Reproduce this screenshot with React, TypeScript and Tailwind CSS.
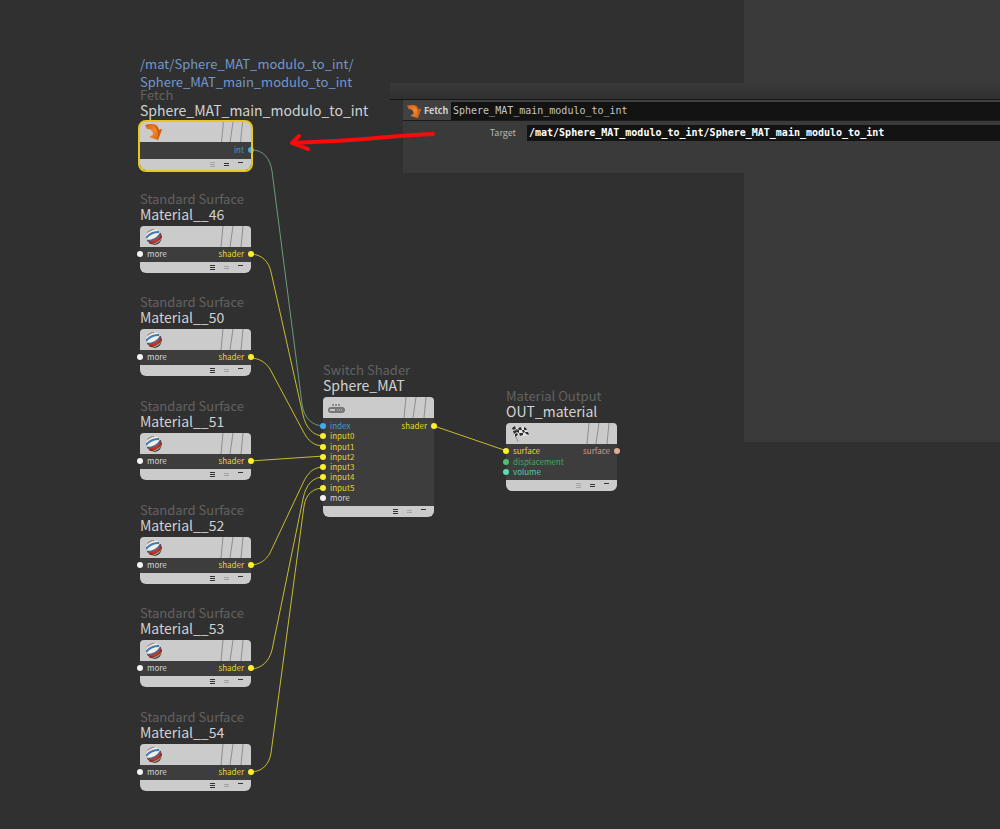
import { useState } from "react"

type Port = { label: string; dot: string; text: string }

type NodeData = {
  id: string
  x: number
  y: number
  type: string
  name: string
  icon: "fetch" | "ball" | "switch" | "flag"
  path?: string[]
  inputs: Port[]
  outputs: Port[]
  body: string
  flags: [boolean, boolean, boolean]
  selected?: boolean
}

const yellow = { dot: "bg-[#fbf02a]", text: "text-[#e3d72c]" }
const white = { dot: "bg-[#f2f2f2]", text: "text-[#d6d6d6]" }
const blue = { dot: "bg-[#42aaf0]", text: "text-[#3f97d0]" }

const material = (num: number, y: number): NodeData => ({
  id: `m${num}`,
  x: 140,
  y,
  type: "Standard Surface",
  name: `Material__${num}`,
  icon: "ball",
  inputs: [{ label: "more", ...white }],
  outputs: [{ label: "shader", ...yellow }],
  body: "min-h-[15px] pt-[2px] pb-[3px]",
  flags: [true, false, true],
})

const nodes: NodeData[] = [
  {
    id: "fetch",
    x: 140,
    y: 55,
    type: "Fetch",
    name: "Sphere_MAT_main_modulo_to_int",
    icon: "fetch",
    path: ["/mat/Sphere_MAT_modulo_to_int/", "Sphere_MAT_main_modulo_to_int"],
    inputs: [],
    outputs: [{ label: "int", ...blue }],
    body: "min-h-[17px] pt-[3px] pb-[4px]",
    flags: [false, true, true],
    selected: true,
  },
  material(46, 191),
  material(50, 294),
  material(51, 398),
  material(52, 502),
  material(53, 605),
  material(54, 709),
  {
    id: "switch",
    x: 323,
    y: 362,
    type: "Switch Shader",
    name: "Sphere_MAT",
    icon: "switch",
    inputs: [
      { label: "index", ...blue },
      { label: "input0", ...yellow },
      { label: "input1", ...yellow },
      { label: "input2", ...yellow },
      { label: "input3", ...yellow },
      { label: "input4", ...yellow },
      { label: "input5", ...yellow },
      { label: "more", ...white },
    ],
    outputs: [{ label: "shader", ...yellow }],
    body: "min-h-[88px] py-[3px]",
    flags: [true, false, true],
  },
  {
    id: "out",
    x: 506,
    y: 388,
    type: "Material Output",
    name: "OUT_material",
    icon: "flag",
    inputs: [
      { label: "surface", ...yellow },
      { label: "displacement", dot: "bg-[#4fc06c]", text: "text-[#48a560]" },
      { label: "volume", dot: "bg-[#55e0b0]", text: "text-[#52cfa4]" },
    ],
    outputs: [{ label: "surface", dot: "bg-[#e2ab98]", text: "text-[#c79d8e]" }],
    body: "min-h-[36px] pt-[2px] pb-[3px]",
    flags: [false, true, true],
  },
]

const wires = [
  "M250 254C262 254 269 262 271 272L303 415C306 428 313 436 324 436",
  "M250 358C260 358 266 363 270 369L303 431C308 441 314 446 324 446",
  "M250 461L324 456",
  "M250 565C260 565 266 560 270 553L303 483C308 472 314 467 324 467",
  "M250 669C262 669 269 661 272 650L303 499C306 484 313 477 324 477",
  "M250 772C262 772 269 765 271 753L304 506C306 494 313 488 324 488",
  "M434 426L507 451",
]

function FetchIcon({ className }: { className: string }) {
  return (
    <svg viewBox="0 0 18 18" className={className} aria-hidden="true">
      <defs>
        <linearGradient id="fetch-fill" x1="0" y1="0" x2="1" y2="1">
          <stop offset="0.1" stopColor="#d9641a" />
          <stop offset="0.5" stopColor="#f08a2c" />
          <stop offset="0.9" stopColor="#d55f10" />
        </linearGradient>
      </defs>
      <path d="M0 2C6 0 13 1 14 7L17 6L13 17L4 14L8 12C8 8 6 6 2 6Z" fill="url(#fetch-fill)" />
      <path d="M8 1C12 2 13 4 14 7L17 6L13 17C14 11 12 5 8 1Z" fill="#cc5d14" />
    </svg>
  )
}

function BallIcon() {
  return (
    <svg viewBox="0 0 18 18" className="size-[18px]" aria-hidden="true">
      <defs>
        <clipPath id="ball">
          <circle cx="9" cy="9" r="8" />
        </clipPath>
        <radialGradient id="shade" cx="0.45" cy="0.4" r="0.6">
          <stop offset="0.6" stopColor="#000" stopOpacity="0" />
          <stop offset="1" stopColor="#000" stopOpacity="0.45" />
        </radialGradient>
      </defs>
      <g clipPath="url(#ball)">
        <rect width="18" height="18" fill="#f2eeea" />
        <path d="M0 0H15C9 1 4 3 0 7Z" fill="#8f6f64" />
        <path d="M1 10C4 6 8 4 14 4" fill="none" stroke="#3f7fb0" strokeWidth="2" />
        <path d="M2 13C8 13 13 10 16 5" fill="none" stroke="#4a6c92" strokeWidth="2" />
        <path d="M4 15C10 14 14 12 17 7" fill="none" stroke="#c53a30" strokeWidth="3" />
        <path d="M7 18C11 17 15 15 18 11" fill="none" stroke="#5b6b4c" strokeWidth="2" />
        <circle cx="9" cy="9" r="8" fill="url(#shade)" />
      </g>
    </svg>
  )
}

function SwitchIcon() {
  return (
    <svg viewBox="0 0 18 18" className="size-[18px]" aria-hidden="true">
      <g fill="#777">
        <circle cx="5" cy="6" r="1" />
        <circle cx="8" cy="6" r="1" />
        <circle cx="11" cy="6" r="1" />
      </g>
      <rect x="0" y="8" width="17" height="6" rx="3" fill="#777" />
      <rect x="2" y="10" width="5" height="2" fill="#c4c4c4" />
      <path d="M9.5 10V12M11.5 10V12M13.5 10V12" stroke="#aaa" />
    </svg>
  )
}

function FlagIcon() {
  return (
    <svg viewBox="0 0 18 18" className="size-[18px]" aria-hidden="true">
      <path d="M2 3L7 17" stroke="#8f8f8f" />
      <path d="M1 3C4 0 7 4 10 2C12 1 14 3 15 3L18 11C15 9 12 13 9 11C7 10 6 12 4 12Z" fill="#e4e4e4" />
      <path
        d="M1 3L4 1L5 4L2 5ZM7 3L10 2L11 5L8 5ZM13 2L15 3L16 5L13 5ZM5 4L8 5L8 8L6 7ZM11 5L13 5L14 7L12 8ZM2 6L5 5L6 7L3 9ZM8 8L12 8L12 10L9 11ZM14 7L17 7L18 10L15 9ZM4 9L6 8L7 10L4 12Z"
        fill="#2f2f2f"
      />
    </svg>
  )
}

function NodeIcon({ icon }: { icon: NodeData["icon"] }) {
  if (icon === "fetch") return <FetchIcon className="size-[18px]" />
  if (icon === "ball") return <BallIcon />
  if (icon === "switch") return <SwitchIcon />
  return <FlagIcon />
}

function Ports({ ports, side }: { ports: Port[]; side: "in" | "out" }) {
  return (
    <ul className="flex flex-col justify-between">
      {ports.map((port) => (
        <li
          key={port.label}
          className={`flex h-[10px] items-center gap-[4px] ${side === "in" ? "-ml-[3px]" : "-mr-[3px] flex-row-reverse"}`}
        >
          <span className={`size-[6px] shrink-0 rounded-full ${port.dot}`} />
          <span className={`text-[8px] leading-[10px] ${port.text}`}>{port.label}</span>
        </li>
      ))}
    </ul>
  )
}

function GraphNode({ node }: { node: NodeData }) {
  const [menu, info, collapse] = node.flags.map((on) => (on ? "#333333" : "#a3a3a3"))
  return (
    <article className="absolute w-[111px] whitespace-nowrap" style={{ left: node.x, top: node.y }}>
      {node.path && (
        <p className="-mb-[4px] text-[13px] leading-[18px] text-[#7199cf]">
          {node.path.map((line) => (
            <span key={line} className="block">
              {line}
            </span>
          ))}
        </p>
      )}
      <p className="text-[13px] leading-[15px] text-[#626262]">{node.type}</p>
      <h2 className="mb-[4px] text-[14px] leading-[16px] text-[#d2d2d2]">{node.name}</h2>
      <div className={node.selected ? "rounded-md outline-2 outline-[#e6c71e]" : ""}>
        <header
          className={`flex items-center justify-between rounded-t-[4px] bg-[#cbcbcb] px-[5px] ${node.selected ? "h-[20px]" : "h-[21px]"}`}
        >
          <NodeIcon icon={node.icon} />
          <svg viewBox="0 0 26 21" className="h-full w-[26px]" fill="none" stroke="#8d8d8d" aria-hidden="true">
            <path d="M3 0L1 21M13 0L10 21M23 0L21 21" />
          </svg>
        </header>
        <div className={`flex justify-between bg-[#3d3d3d] ${node.body}`}>
          <Ports ports={node.inputs} side="in" />
          <Ports ports={node.outputs} side="out" />
        </div>
        <footer className="flex h-[11px] items-start justify-end rounded-b-[6px] bg-[#cbcbcb] pt-[2px] pr-[7px]">
          <svg viewBox="0 0 34 8" className="h-[8px] w-[34px]" fill="none" aria-hidden="true">
            <path d="M0 1.5H5M0 3.5H5M0 5.5H5" stroke={menu} />
            <path d="M14 2.5H19M14 4.5H19" stroke={info} />
            <path d="M28 1.5H33" stroke={collapse} />
          </svg>
        </footer>
      </div>
    </article>
  )
}

function ParameterPane() {
  const [name, setName] = useState("Sphere_MAT_main_modulo_to_int")
  const [target, setTarget] = useState("/mat/Sphere_MAT_modulo_to_int/Sphere_MAT_main_modulo_to_int")

  return (
    <section className="absolute top-[83px] right-0 left-[390px]">
      <div className="h-[17px] border-b border-[#151515] bg-linear-to-b from-[#3a3a3a] to-[#303030]" />
      <div className="ml-[13px] h-[73px] bg-[#3a3a3a]">
        <div className="flex h-[21px] items-center border-b border-[#1b1b1b] bg-[#414141] pt-[2px]">
          <label htmlFor="node-name" className="flex w-[48px] items-center gap-[2px] pl-[4px] text-[9px] font-bold text-[#d0d0d0]">
            <FetchIcon className="size-[15px]" />
            Fetch
          </label>
          <input
            id="node-name"
            value={name}
            onChange={(e) => setName(e.target.value)}
            className="h-[18px] min-w-0 flex-1 bg-[#131313] pl-[2px] font-['DejaVu_Sans_Mono',monospace] text-[10px] leading-[18px] text-[#c6c6c6] outline-none"
          />
        </div>
        <div className="flex items-center pt-[4px]">
          <label htmlFor="target" className="w-[124px] pr-[11px] text-right text-[9px] leading-[16px] text-[#b5b5b5]">
            Target
          </label>
          <input
            id="target"
            value={target}
            onChange={(e) => setTarget(e.target.value)}
            className="h-[16px] min-w-0 flex-1 bg-[#131313] pl-[2px] font-['DejaVu_Sans_Mono',monospace] text-[10px] leading-[16px] font-bold text-white outline-none"
          />
        </div>
      </div>
    </section>
  )
}

export default function App() {
  return (
    <main className="relative min-h-screen overflow-hidden bg-[#303030] font-['Noto_Sans_CJK_SC','Noto_Sans',sans-serif]">
      {/* Side panel behind the parameters */}
      <div className="absolute top-0 right-0 left-[744px] h-[442px] bg-[#3a3a3a]" />

      <ParameterPane />

      {/* Wires */}
      <svg className="pointer-events-none absolute top-0 left-0 h-[829px] w-[1000px]" fill="none" aria-hidden="true">
        <path d="M252 150C263 150 270 158 272 171L302 404C304 418 312 426 324 426" stroke="#6a9b7b" />
        {wires.map((d) => (
          <path key={d} d={d} stroke="#c5bd2c" />
        ))}
      </svg>

      {nodes.map((node) => (
        <GraphNode key={node.id} node={node} />
      ))}

      {/* Hand drawn arrow */}
      <svg
        viewBox="0 0 150 24"
        className="pointer-events-none absolute top-[130px] left-[288px] h-[24px] w-[150px]"
        fill="none"
        stroke="#f80b0b"
        strokeWidth="4"
        strokeLinecap="round"
        strokeLinejoin="round"
        aria-hidden="true"
      >
        <path d="M145 4C107 5 82 10 46 11L4 13M11 6L4 13L20 19" />
      </svg>
    </main>
  )
}
